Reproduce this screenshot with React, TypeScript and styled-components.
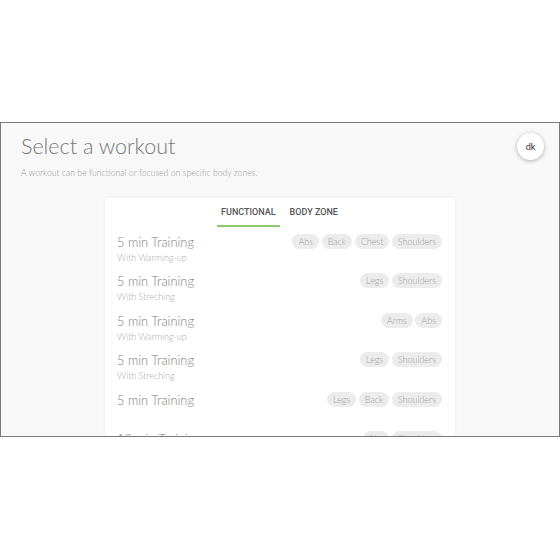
import * as React from "react";
import styled, { createGlobalStyle } from "styled-components";

const GlobalStyle = createGlobalStyle`
	html, body {
		margin: 0;
		padding: 0;
		background: #ffffff;
	}

	body {
		font-family: Roboto, "Liberation Sans", sans-serif;
	}
`;

const light = `Lato, Roboto, "Liberation Sans", sans-serif`;

const Frame = styled.div`
	margin-top: 122px;
	height: 313px;
	border: 1px solid #7a7a7a;
	background: #f8f8f8;
	overflow: hidden;
	position: relative;
`;

const Header = styled.header`
	padding: 10px 0 0 20px;
`;

const Title = styled.h1`
	margin: 0;
	font-family: ${light};
	font-size: 21.5px;
	font-weight: 300;
	line-height: 26px;
	color: #777;
`;

const Subtitle = styled.p`
	margin: 8px 0 0;
	font-family: ${light};
	font-size: 8.7px;
	font-weight: 300;
	line-height: 12px;
	color: #999;
`;

const Avatar = styled.div`
	position: absolute;
	top: 10px;
	right: 15px;
	width: 27px;
	height: 27px;
	border-radius: 50%;
	background: #fff;
	box-shadow: 0 1px 4px rgba(0, 0, 0, 0.3);
	display: flex;
	align-items: center;
	justify-content: center;
	font-size: 9px;
	color: #333;
`;

const Card = styled.section`
	width: 350px;
	margin: 19px auto 0;
	background: #fff;
	box-shadow: 0 0 3px rgba(0, 0, 0, 0.06);
	padding: 0 13px 20px 12px;
	box-sizing: border-box;
`;

const Tabs = styled.nav`
	display: flex;
	justify-content: center;
	gap: 6px;
	padding-top: 6px;
`;

const Tab = styled.div<{ $active?: boolean }>`
	padding: 3px 4px 0;
	height: 18px;
	font-size: 9px;
	font-weight: 500;
	color: #555;
	border-bottom: 2px solid ${(p) => (p.$active ? "#8bc96f" : "transparent")};
`;

const List = styled.ul`
	list-style: none;
	margin: 0;
	padding: 6px 0 0;
`;

const Row = styled.li`
	display: flex;
	justify-content: space-between;
	align-items: flex-start;
	height: 39.4px;
`;

const Info = styled.div`
	display: flex;
	flex-direction: column;
`;

const RowTitle = styled.span`
	font-family: ${light};
	font-size: 12.8px;
	font-weight: 300;
	line-height: 18px;
	color: #808080;
`;

const RowSub = styled.span`
	font-family: ${light};
	font-size: 9px;
	font-weight: 300;
	line-height: 12px;
	color: #aaa;
	margin-top: 1px;
`;

const Chips = styled.div`
	display: flex;
	gap: 2.5px;
	padding-top: 1px;
`;

const Chip = styled.span`
	height: 15px;
	line-height: 15px;
	padding: 0 6px;
	border-radius: 8px;
	background: #ececec;
	font-family: ${light};
	font-size: 9px;
	font-weight: 300;
	color: #a0a0a0;
`;

const workouts = [
	{ title: "5 min Training", sub: "With Warming-up", tags: ["Abs", "Back", "Chest", "Shoulders"] },
	{ title: "5 min Training", sub: "With Streching", tags: ["Legs", "Shoulders"] },
	{ title: "5 min Training", sub: "With Warming-up", tags: ["Arms", "Abs"] },
	{ title: "5 min Training", sub: "With Streching", tags: ["Legs", "Shoulders"] },
	{ title: "5 min Training", sub: "", tags: ["Legs", "Back", "Shoulders"] },
	{ title: "10 min Training", sub: "With Warming-up", tags: ["Abs", "Shoulders"] },
];

export default function App() {
	return (
		<>
			<GlobalStyle />
			<Frame>
				<Header>
					<Title>Select a workout</Title>
					<Subtitle>A workout can be functional or focused on specific body zones.</Subtitle>
				</Header>
				<Avatar>dk</Avatar>
				<Card>
					<Tabs>
						<Tab $active>FUNCTIONAL</Tab>
						<Tab>BODY ZONE</Tab>
					</Tabs>
					<List>
						{workouts.map((w, i) => (
							<Row key={i}>
								<Info>
									<RowTitle>{w.title}</RowTitle>
									{w.sub && <RowSub>{w.sub}</RowSub>}
								</Info>
								<Chips>
									{w.tags.map((t) => (
										<Chip key={t}>{t}</Chip>
									))}
								</Chips>
							</Row>
						))}
					</List>
				</Card>
			</Frame>
		</>
	);
}
